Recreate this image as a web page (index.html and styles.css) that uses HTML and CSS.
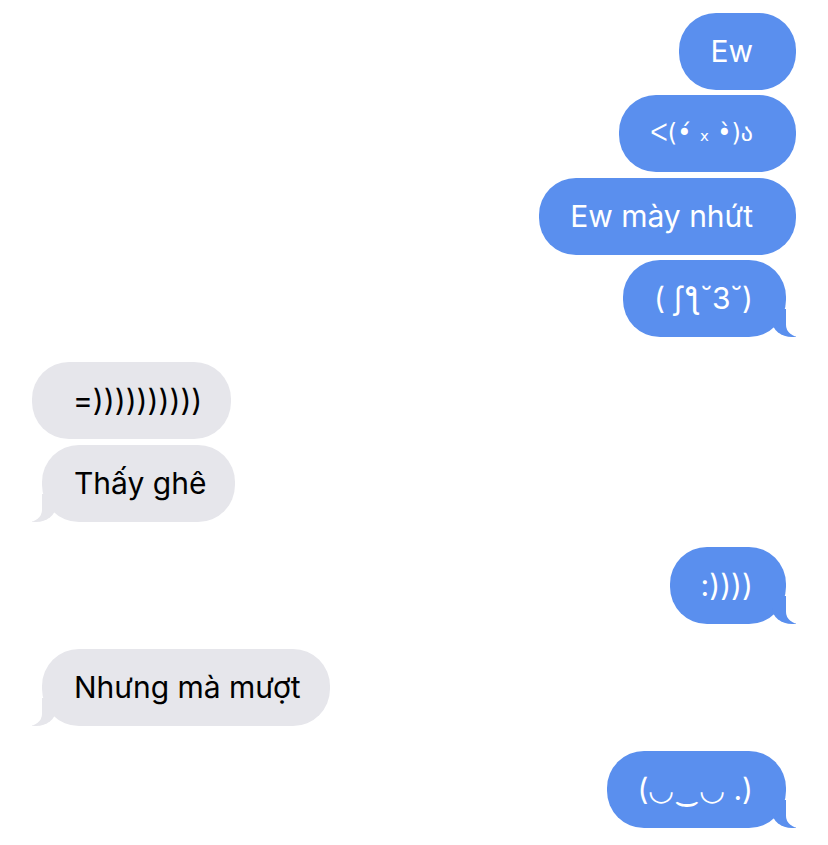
FILE: index.html
```html
<!DOCTYPE html>
<html lang="vi">
<head>
    <meta charset="UTF-8">
    <meta name="viewport" content="width=device-width, initial-scale=1.0">
    <title>Tin nhắn</title>
    <link rel="stylesheet" href="styles.css">
</head>
<body>

    <div class="thread">

        <div class="group sent">
            <div class="bubble">Ew</div>
            <div class="bubble kaomoji">ᐸ(•́ ₓ •̀)ა</div>
            <div class="bubble">Ew mày nhứt</div>
            <div class="bubble tail">( ʃƪ˘3˘)</div>
        </div>

        <div class="group received">
            <div class="bubble">=))))))))))</div>
            <div class="bubble tail">Thấy ghê</div>
        </div>

        <div class="group sent">
            <div class="bubble tail">:))))</div>
        </div>

        <div class="group received">
            <div class="bubble tail">Nhưng mà mượt</div>
        </div>

        <div class="group sent">
            <div class="bubble tail">(◡‿◡ .)</div>
        </div>

    </div>

</body>
</html>
```

FILE: styles.css
```css
body {
    margin: 0;
    background-color: #ffffff;
    font-family: Inter, "Noto Sans", sans-serif;
}

.thread {
    display: flex;
    flex-direction: column;
    gap: 25px;
    padding: 13px 32px;
}

.group {
    display: flex;
    flex-direction: column;
    gap: 5.4px;
}

.group.sent {
    align-items: flex-end;
}

.group.received {
    align-items: flex-start;
}

.bubble {
    position: relative;
    font-size: 30px;
    line-height: 37px;
    padding: 20px 31px;
    border-radius: 37px;
    white-space: nowrap;
}

/* combining marks need a font that has the base glyphs too */
.bubble.kaomoji {
    font-family: "DejaVu Sans", sans-serif;
    font-size: 24px;
}

.sent .bubble {
    background-color: #5a8fee;
    color: #ffffff;
    padding-right: 43px;
}

.received .bubble {
    background-color: #e6e6eb;
    color: #000000;
    padding-left: 41px;
    padding-right: 29px;
}

/* bubbles with a tail sit 10px in from the edge */
.sent .bubble.tail {
    margin-right: 10px;
    padding-right: 33px;
}

.received .bubble.tail {
    margin-left: 10px;
    padding-left: 32px;
}

.bubble.tail::before,
.bubble.tail::after {
    content: "";
    position: absolute;
    bottom: 0;
    height: 28px;
}

.sent .bubble.tail::before {
    right: -10px;
    width: 24px;
    background-color: #5a8fee;
    border-bottom-left-radius: 20px 16px;
}

.sent .bubble.tail::after {
    right: -30px;
    width: 30px;
    background-color: #ffffff;
    border-bottom-left-radius: 14px 12px;
}

.received .bubble.tail::before {
    left: -10px;
    width: 24px;
    background-color: #e6e6eb;
    border-bottom-right-radius: 20px 16px;
}

.received .bubble.tail::after {
    left: -30px;
    width: 30px;
    background-color: #ffffff;
    border-bottom-right-radius: 14px 12px;
}
```
